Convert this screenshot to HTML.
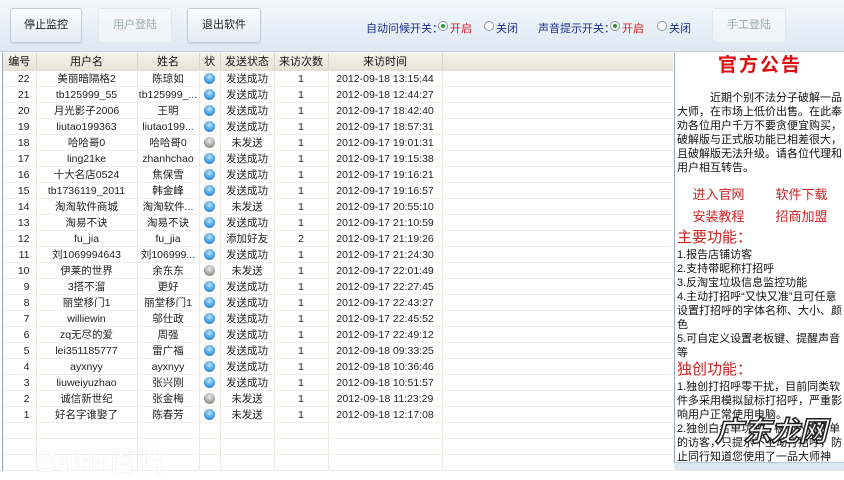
<!DOCTYPE html>
<html><head><meta charset="utf-8"><style>
*{margin:0;padding:0;box-sizing:border-box}
body{width:844px;height:471px;overflow:hidden;background:#fff;font-family:"Liberation Sans","Noto Sans CJK SC",sans-serif;font-size:11px;color:#222;position:relative}
.top{position:absolute;left:0;top:0;width:844px;height:52px;background:linear-gradient(#f4f8fc,#e6eef7 60%,#dfe8f2);border-bottom:1px solid #c4d0dc}
.btn{position:absolute;top:8px;height:35px;border:1px solid #c3ccd6;border-radius:3px;background:linear-gradient(#fbfcfe,#e4ebf3);text-align:center;line-height:33px;font-size:11px;color:#222;box-shadow:0 1px 1px #c9d3de}
.btn.dis{color:#9aa;border-color:#e0e6ec;background:linear-gradient(#f6f9fc,#eef3f8);box-shadow:none}
.lbl{position:absolute;top:20px;font-size:11px;color:#1a2f8a}
.rad{position:absolute;top:21px;width:10px;height:10px;border:1px solid #8a99a8;border-radius:50%;background:#fff}
.rad.on::after{content:"";position:absolute;left:2px;top:2px;width:4px;height:4px;border-radius:50%;background:#2b9a2b}
.red{color:#d22}
.tbl{position:absolute;left:2px;top:53px;width:671px;height:418px;border-left:1px solid #8fa7bd;overflow:hidden}
table{border-collapse:collapse;table-layout:fixed;width:671px}
th{height:17px;background:linear-gradient(#f4f2ea,#e8e5da);font-weight:normal;font-size:11px;border-right:1px solid #d8d4c8;border-bottom:2px solid #e2dfd4;color:#111}
td{height:16px;border-right:1px solid #ecebe4;border-bottom:1px solid #f0efe9;text-align:center;font-size:10.5px;white-space:nowrap;overflow:hidden}
td:first-child{text-align:right;padding-right:6px}
.i{display:inline-block;width:11px;height:11px;border-radius:50%;background:radial-gradient(circle at 50% 35%,#bfe6ff,#3b9be0 60%,#1d6fb8);vertical-align:middle}
.g{background:radial-gradient(circle at 50% 35%,#eee,#999 65%,#777)}
.panel{position:absolute;left:674px;top:53px;width:170px;height:418px;background:#fff;border-left:1px solid #9ab;padding:0 1px 0 2px;font-size:11px;line-height:14px;color:#111;overflow:hidden}
.panel h1{font-size:19px;color:#d11;text-align:center;margin-top:4px;height:30px;letter-spacing:2px;font-family:"Noto Sans CJK SC",sans-serif}
.lk{color:#c22;font-size:13px;display:flex;justify-content:space-around;line-height:22px}
.h2{color:#c22;font-size:15px;line-height:20px}
.sb{position:absolute;left:674px;top:462px;width:170px;height:9px;background:#dde8f2;border-top:1px solid #b8c8d8}
.wm{position:absolute;left:38px;top:440px;font-size:28px;color:#fff;text-shadow:0 0 1px #ccc;letter-spacing:1px}
.wm2{position:absolute;left:715px;top:410px;font-size:28px;color:#fff;font-weight:bold;-webkit-text-stroke:1.5px #222;font-style:italic}
</style></head><body>
<div class="top">
<div class="btn" style="left:10px;width:72px">停止监控</div>
<div class="btn dis" style="left:98px;width:74px">用户登陆</div>
<div class="btn" style="left:187px;width:74px">退出软件</div>
<span class="lbl" style="left:366px">自动问候开关：</span>
<div class="rad on" style="left:438px"></div><span class="lbl red" style="left:450px">开启</span>
<div class="rad" style="left:484px"></div><span class="lbl" style="left:496px">关闭</span>
<span class="lbl" style="left:538px">声音提示开关：</span>
<div class="rad on" style="left:610px"></div><span class="lbl red" style="left:622px">开启</span>
<div class="rad" style="left:657px"></div><span class="lbl" style="left:669px">关闭</span>
<div class="btn dis" style="left:712px;width:74px">手工登陆</div>
</div>
<div class="tbl"><table>
<colgroup><col style="width:33px"><col style="width:101px"><col style="width:62px"><col style="width:21px"><col style="width:54px"><col style="width:54px"><col style="width:114px"><col></colgroup>
<tr><th>编号</th><th>用户名</th><th>姓名</th><th>状</th><th>发送状态</th><th>来访次数</th><th>来访时间</th><th style="border-right:none"></th></tr>
<tr><td>22</td><td>美丽暗隔格2</td><td>陈琼如</td><td><span class="i"></span></td><td>发送成功</td><td>1</td><td>2012-09-18 13:15:44</td><td></td></tr>
<tr><td>21</td><td>tb125999_55</td><td>tb125999_...</td><td><span class="i"></span></td><td>发送成功</td><td>1</td><td>2012-09-18 12:44:27</td><td></td></tr>
<tr><td>20</td><td>月光影子2006</td><td>王明</td><td><span class="i"></span></td><td>发送成功</td><td>1</td><td>2012-09-17 18:42:40</td><td></td></tr>
<tr><td>19</td><td>liutao199363</td><td>liutao199...</td><td><span class="i"></span></td><td>发送成功</td><td>1</td><td>2012-09-17 18:57:31</td><td></td></tr>
<tr><td>18</td><td>哈哈哥0</td><td>哈哈哥0</td><td><span class="i g"></span></td><td>未发送</td><td>1</td><td>2012-09-17 19:01:31</td><td></td></tr>
<tr><td>17</td><td>ling21ke</td><td>zhanhchao</td><td><span class="i"></span></td><td>发送成功</td><td>1</td><td>2012-09-17 19:15:38</td><td></td></tr>
<tr><td>16</td><td>十大名店0524</td><td>焦保雪</td><td><span class="i"></span></td><td>发送成功</td><td>1</td><td>2012-09-17 19:16:21</td><td></td></tr>
<tr><td>15</td><td>tb1736119_2011</td><td>韩金峰</td><td><span class="i"></span></td><td>发送成功</td><td>1</td><td>2012-09-17 19:16:57</td><td></td></tr>
<tr><td>14</td><td>淘淘软件商城</td><td>淘淘软件...</td><td><span class="i"></span></td><td>未发送</td><td>1</td><td>2012-09-17 20:55:10</td><td></td></tr>
<tr><td>13</td><td>淘易不诀</td><td>淘易不诀</td><td><span class="i"></span></td><td>发送成功</td><td>1</td><td>2012-09-17 21:10:59</td><td></td></tr>
<tr><td>12</td><td>fu_jia</td><td>fu_jia</td><td><span class="i"></span></td><td>添加好友</td><td>2</td><td>2012-09-17 21:19:26</td><td></td></tr>
<tr><td>11</td><td>刘1069994643</td><td>刘106999...</td><td><span class="i"></span></td><td>发送成功</td><td>1</td><td>2012-09-17 21:24:30</td><td></td></tr>
<tr><td>10</td><td>伊莱的世界</td><td>余东东</td><td><span class="i g"></span></td><td>未发送</td><td>1</td><td>2012-09-17 22:01:49</td><td></td></tr>
<tr><td>9</td><td>3搭不溜</td><td>更好</td><td><span class="i"></span></td><td>发送成功</td><td>1</td><td>2012-09-17 22:27:45</td><td></td></tr>
<tr><td>8</td><td>丽堂移门1</td><td>丽堂移门1</td><td><span class="i"></span></td><td>发送成功</td><td>1</td><td>2012-09-17 22:43:27</td><td></td></tr>
<tr><td>7</td><td>williewin</td><td>邬仕政</td><td><span class="i"></span></td><td>发送成功</td><td>1</td><td>2012-09-17 22:45:52</td><td></td></tr>
<tr><td>6</td><td>zq无尽的爱</td><td>周强</td><td><span class="i"></span></td><td>发送成功</td><td>1</td><td>2012-09-17 22:49:12</td><td></td></tr>
<tr><td>5</td><td>lei351185777</td><td>雷广福</td><td><span class="i"></span></td><td>发送成功</td><td>1</td><td>2012-09-18 09:33:25</td><td></td></tr>
<tr><td>4</td><td>ayxnyy</td><td>ayxnyy</td><td><span class="i"></span></td><td>发送成功</td><td>1</td><td>2012-09-18 10:36:46</td><td></td></tr>
<tr><td>3</td><td>liuweiyuzhao</td><td>张兴刚</td><td><span class="i"></span></td><td>发送成功</td><td>1</td><td>2012-09-18 10:51:57</td><td></td></tr>
<tr><td>2</td><td>诚信新世纪</td><td>张金梅</td><td><span class="i g"></span></td><td>未发送</td><td>1</td><td>2012-09-18 11:23:29</td><td></td></tr>
<tr><td>1</td><td>好名字谁娶了</td><td>陈春芳</td><td><span class="i"></span></td><td>未发送</td><td>1</td><td>2012-09-18 12:17:08</td><td></td></tr>
<tr><td></td><td></td><td></td><td></td><td></td><td></td><td></td><td></td></tr>
<tr><td></td><td></td><td></td><td></td><td></td><td></td><td></td><td></td></tr>
<tr><td></td><td></td><td></td><td></td><td></td><td></td><td></td><td></td></tr>
<tr><td></td><td></td><td></td><td></td><td></td><td></td><td></td><td></td></tr>
</table></div>
<div class="wm">Bai<span style="font-size:22px">du</span>百科</div>
<div class="panel">
<h1>官方公告</h1>
<div style="padding-top:4px">　　　近期个别不法分子破解一品大师，在市场上低价出售。在此奉劝各位用户千万不要贪便宜购买，破解版与正式版功能已相差很大，且破解版无法升级。请各位代理和用户相互转告。</div>
<div class="lk" style="margin-top:9px"><span>进入官网</span><span>软件下载</span></div>
<div class="lk"><span>安装教程</span><span>招商加盟</span></div>
<div class="h2">主要功能：</div>
<div>1.报告店铺访客<br>2.支持带昵称打招呼<br>3.反淘宝垃圾信息监控功能<br>4.主动打招呼“又快又准”且可任意设置打招呼的字体名称、大小、颜色<br>5.可自定义设置老板键、提醒声音等</div>
<div class="h2">独创功能：</div>
<div> 1.独创打招呼零干扰，目前同类软件多采用模拟鼠标打招呼，严重影响用户正常使用电脑。<br> 2.独创白名单功能，被列入白名单的访客，只提示不主动打招呼，防止同行知道您使用了一品大师神器。</div>
</div>
<div class="sb"></div>
<div class="wm2">广东龙网</div>
</body></html>
